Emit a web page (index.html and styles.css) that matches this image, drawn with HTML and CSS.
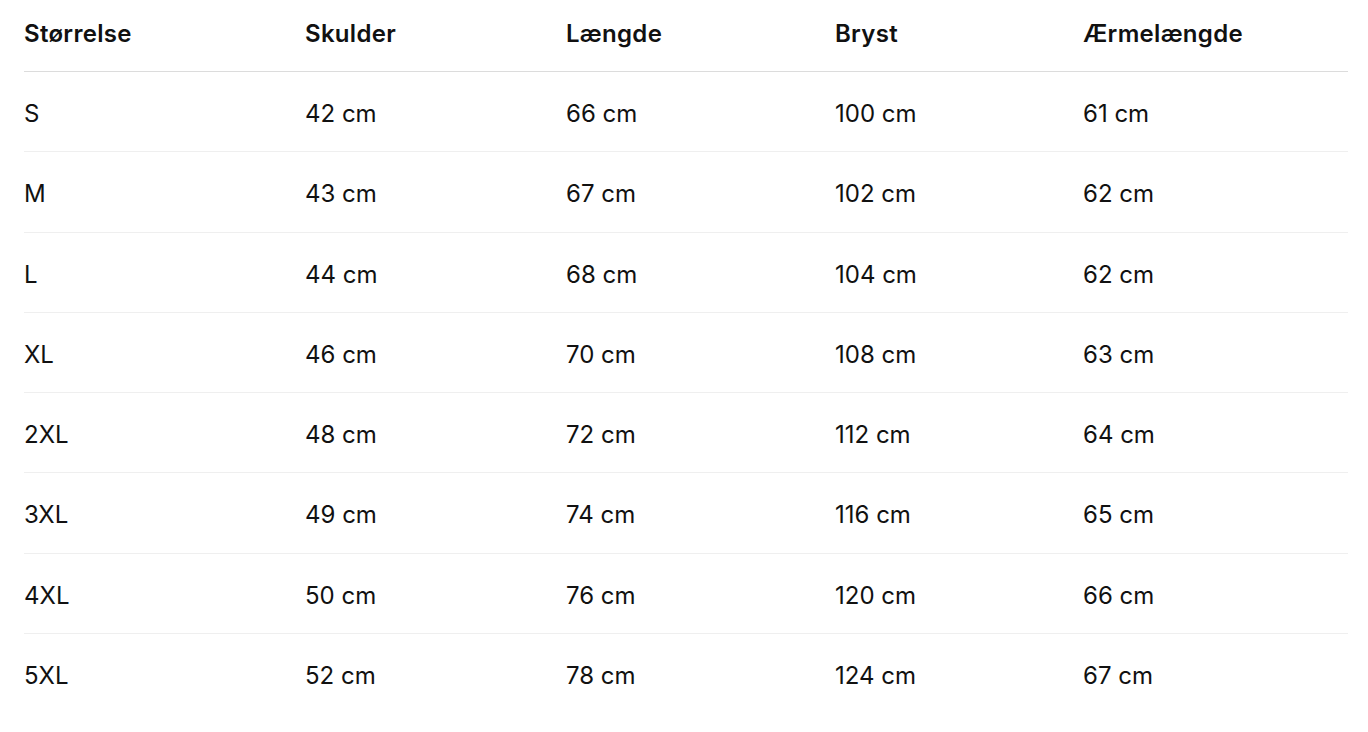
FILE: index.html
```html
<!DOCTYPE html>
<html lang="da">
<head>
<meta charset="utf-8">
<title>Størrelsesguide</title>
<link rel="stylesheet" href="styles.css">
</head>
<body>
<table class="size-table">
  <colgroup>
    <col class="c1"><col class="c2"><col class="c3"><col class="c4"><col class="c5">
  </colgroup>
  <thead>
    <tr><th>Størrelse</th><th>Skulder</th><th>Længde</th><th>Bryst</th><th>Ærmelængde</th></tr>
  </thead>
  <tbody>
    <tr><td>S</td><td>42 cm</td><td>66 cm</td><td>100 cm</td><td>61 cm</td></tr>
    <tr><td>M</td><td>43 cm</td><td>67 cm</td><td>102 cm</td><td>62 cm</td></tr>
    <tr><td>L</td><td>44 cm</td><td>68 cm</td><td>104 cm</td><td>62 cm</td></tr>
    <tr><td>XL</td><td>46 cm</td><td>70 cm</td><td>108 cm</td><td>63 cm</td></tr>
    <tr><td>2XL</td><td>48 cm</td><td>72 cm</td><td>112 cm</td><td>64 cm</td></tr>
    <tr><td>3XL</td><td>49 cm</td><td>74 cm</td><td>116 cm</td><td>65 cm</td></tr>
    <tr><td>4XL</td><td>50 cm</td><td>76 cm</td><td>120 cm</td><td>66 cm</td></tr>
    <tr><td>5XL</td><td>52 cm</td><td>78 cm</td><td>124 cm</td><td>67 cm</td></tr>
  </tbody>
</table>
</body>
</html>
```
FILE: styles.css
```css
html, body {
  margin: 0;
  padding: 0;
  background: #fff;
}
body {
  padding: 0 20px 0 24px;
  font-family: Inter, "Liberation Sans", Arial, sans-serif;
  color: #111;
}
.size-table {
  width: 1324px;
  border-collapse: collapse;
  table-layout: fixed;
  font-size: 24px;
}
.c1 { width: 281px; }
.c2 { width: 261px; }
.c3 { width: 269px; }
.c4 { width: 248px; }
.c5 { width: 265px; }
.size-table th,
.size-table td {
  text-align: left;
  padding: 0;
  line-height: 28px;
}
.size-table th {
  font-weight: 600;
  letter-spacing: 0.3px;
  padding-top: 20px;
  padding-bottom: 23px;
  border-bottom: 1px solid #dcdcdc;
}
.size-table td {
  font-weight: 400;
  padding-top: 28px;
  padding-bottom: 23.3px;
  border-bottom: 1px solid #efefef;
}
.size-table tbody tr:last-child td {
  border-bottom: none;
}
```
